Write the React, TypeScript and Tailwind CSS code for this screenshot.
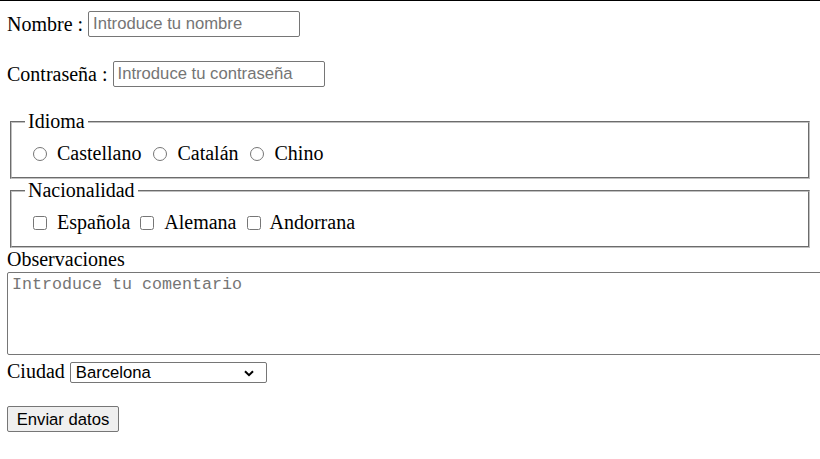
import React from "react";

export default function App() {
  const serif = "font-['Liberation_Serif','Times_New_Roman',serif]";
  const sans = "font-['Liberation_Sans',Arial,sans-serif]";
  const inputCls = `${sans} ml-[5px] w-[212px] h-[26px] border border-[#767676] rounded-[2px] px-[4px] text-[16.67px] text-black placeholder:text-[#757575] outline-none bg-white`;
  return (
    <div
      className={`${serif} text-[20px] leading-[23px] text-black bg-white border-t border-black px-[7px] overflow-hidden min-h-[459px]`}
    >
      {/* Nombre */}
      <div className="flex items-center h-[26px] mt-[10px]">
        <span>Nombre :</span>
        <input type="text" placeholder="Introduce tu nombre" className={inputCls} />
      </div>

      {/* Contraseña */}
      <div className="flex items-center h-[26px] mt-[24px]">
        <span>Contraseña :</span>
        <input type="password" placeholder="Introduce tu contraseña" className={inputCls} />
      </div>

      {/* Idioma */}
      <fieldset className="mt-[23px] mx-[3px] border-2 [border-style:groove] border-[#c0c0c0] px-[12px] pb-[12px]">
        <legend className="ml-[1px] px-[3px] leading-[23px]">Idioma</legend>
        <div className="flex items-center h-[23px] mt-[9px]">
          <input type="radio" name="idioma" className="ml-[9px] w-[14px] h-[14px]" />
          <span className="ml-[10px]">Castellano</span>
          <input type="radio" name="idioma" className="ml-[12px] w-[14px] h-[14px]" />
          <span className="ml-[10px]">Catalán</span>
          <input type="radio" name="idioma" className="ml-[11px] w-[14px] h-[14px]" />
          <span className="ml-[11px]">Chino</span>
        </div>
      </fieldset>

      {/* Nacionalidad */}
      <fieldset className="mx-[3px] border-2 [border-style:groove] border-[#c0c0c0] px-[12px] pb-[12px]">
        <legend className="ml-[1px] px-[3px] leading-[23px]">Nacionalidad</legend>
        <div className="flex items-center h-[23px] mt-[9px]">
          <input type="checkbox" className="ml-[9px] w-[14px] h-[14px]" />
          <span className="ml-[10px]">Española</span>
          <input type="checkbox" className="ml-[10px] w-[14px] h-[14px]" />
          <span className="ml-[10px]">Alemana</span>
          <input type="checkbox" className="ml-[10px] w-[14px] h-[14px]" />
          <span className="ml-[9px]">Andorrana</span>
        </div>
      </fieldset>

      {/* Observaciones */}
      <div className="leading-[23px]">Observaciones</div>
      <textarea
        placeholder="Introduce tu comentario"
        className="block mt-[1px] w-[840px] h-[83px] border border-[#767676] rounded-[2px] px-[4px] py-[2px] font-['Liberation_Mono','Courier_New',monospace] text-[16.67px] leading-[19px] placeholder:text-[#757575] resize-none outline-none"
      />

      {/* Ciudad */}
      <div className="flex items-start h-[23px] mt-[4px]">
        <span className="leading-[23px] pt-[1px]">Ciudad</span>
        <div className="relative ml-[5px] mt-[3px]">
          <select
            className={`${sans} appearance-none block w-[197px] h-[21px] border border-[#767676] rounded-[2px] pl-[5px] text-[16.67px] leading-[19px] bg-white text-black outline-none`}
            defaultValue="Barcelona"
          >
            <option>Barcelona</option>
            <option>Madrid</option>
            <option>Valencia</option>
          </select>
          <svg
            className="absolute right-[13px] top-[8px] pointer-events-none"
            width="10"
            height="7"
            viewBox="0 0 10 7"
          >
            <path d="M1 1.2 L5 5.2 L9 1.2" fill="none" stroke="#000" strokeWidth="2" />
          </svg>
        </div>
      </div>

      {/* Button */}
      <button
        className={`${sans} block mt-[24px] w-[112px] h-[26px] bg-[#efefef] border border-[#767676] rounded-[2px] text-[16.67px] leading-[19px] text-black`}
      >
        Enviar datos
      </button>
    </div>
  );
}
